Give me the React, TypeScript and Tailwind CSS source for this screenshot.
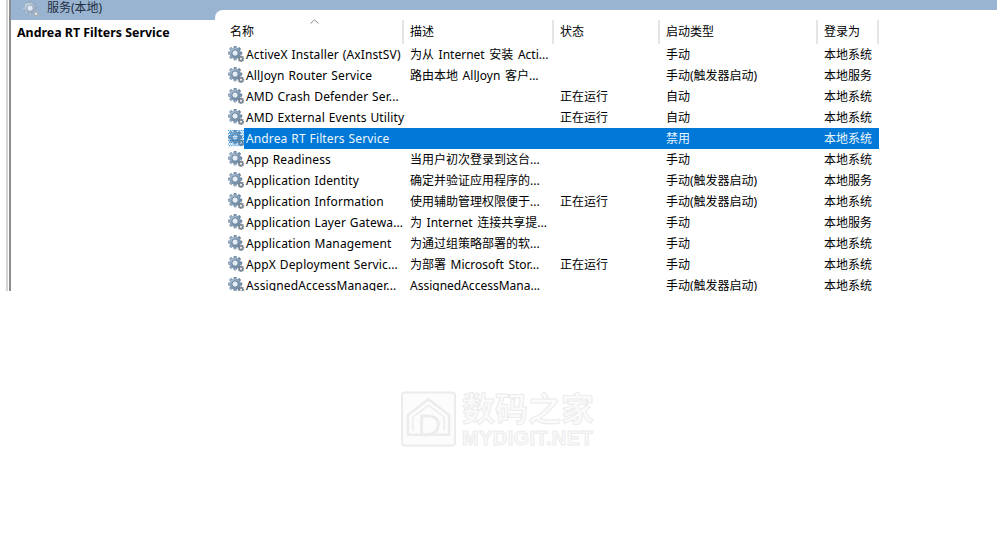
const font = { fontFamily: '"Noto Sans", "Noto Sans CJK SC", sans-serif' };

type Row = { n: string; d: string; s: string; t: string; l: string; sel?: boolean };

const rows: Row[] = [
  { n: "ActiveX Installer (AxInstSV)", d: "为从 Internet 安装 Acti...", s: "", t: "手动", l: "本地系统" },
  { n: "AllJoyn Router Service", d: "路由本地 AllJoyn 客户...", s: "", t: "手动(触发器启动)", l: "本地服务" },
  { n: "AMD Crash Defender Ser...", d: "", s: "正在运行", t: "自动", l: "本地系统" },
  { n: "AMD External Events Utility", d: "", s: "正在运行", t: "自动", l: "本地系统" },
  { n: "Andrea RT Filters Service", d: "", s: "", t: "禁用", l: "本地系统", sel: true },
  { n: "App Readiness", d: "当用户初次登录到这台...", s: "", t: "手动", l: "本地系统" },
  { n: "Application Identity", d: "确定并验证应用程序的...", s: "", t: "手动(触发器启动)", l: "本地服务" },
  { n: "Application Information", d: "使用辅助管理权限便于...", s: "正在运行", t: "手动(触发器启动)", l: "本地系统" },
  { n: "Application Layer Gatewa...", d: "为 Internet 连接共享提...", s: "", t: "手动", l: "本地服务" },
  { n: "Application Management", d: "为通过组策略部署的软...", s: "", t: "手动", l: "本地系统" },
  { n: "AppX Deployment Servic...", d: "为部署 Microsoft Stor...", s: "正在运行", t: "手动", l: "本地系统" },
  { n: "AssignedAccessManager...", d: "AssignedAccessMana...", s: "", t: "手动(触发器启动)", l: "本地系统" },
];

const teeth = [0, 45, 90, 135, 180, 225, 270, 315];

function Gear({ selected, faint }: { selected?: boolean; faint?: boolean }) {
  const id = selected ? "dither" : faint ? "faint" : "plain";
  return (
    <svg width="17" height="17" viewBox="0 0 18 18" className="block shrink-0">
      <defs>
        <radialGradient id={id + "g"} cx="0.35" cy="0.3" r="0.9">
          <stop offset="0" stopColor={faint ? "#d5e0ec" : "#b4c6da"} />
          <stop offset="1" stopColor={faint ? "#7f95ad" : "#5b7896"} />
        </radialGradient>
      </defs>
      <g fill={`url(#${id}g)`}>
        {teeth.map((a) => (
          <rect key={a} x="6.1" y="0" width="2.8" height="15" rx="0.7" transform={`rotate(${a} 7.5 7.5)`} />
        ))}
        <circle cx="7.5" cy="7.5" r="6" />
      </g>
      <circle cx="7.5" cy="7.5" r="3.4" fill={faint ? "#dfe8f2" : "#e4edf6"} />
      <circle cx="7.5" cy="7.5" r="3.4" fill="none" stroke={faint ? "#8aa0b6" : "#5d7792"} strokeWidth="1" />
      <g fill={faint ? "#a7b2bd" : "#7d8894"}>
        {teeth.map((a) => (
          <rect key={a} x="13.1" y="10.2" width="1.3" height="6.6" transform={`rotate(${a} 13.75 13.5)`} />
        ))}
        <circle cx="13.75" cy="13.5" r="2.4" />
      </g>
      <circle cx="13.75" cy="13.5" r="1" fill="#ffffff" />
      {selected && (
        <g fill="#0078d7">
          {Array.from({ length: 100 }).map((_, i) => {
            const x = i % 10;
            const y = Math.floor(i / 10);
            return <rect key={i} x={x * 2 + (y % 2) * 1} y={y * 1.8} width="1.1" height="0.9" />;
          })}
        </g>
      )}
    </svg>
  );
}

function Head({ w, pl, label }: { w: string; pl: string; label: string }) {
  return (
    <div className={`${w} ${pl} h-full shrink-0 border-r-2 border-[#e5e5e5] flex items-center text-[12px] leading-none text-black`}>
      {label}
    </div>
  );
}

export default function App() {
  return (
    <div className="w-[997px] h-[540px] bg-white relative overflow-hidden" style={font}>
      <div className="h-[291px] flex overflow-hidden">
        <div className="ml-[6px] w-[5px] h-full shrink-0 border-l-2 border-r-2 border-l-[#d4d4d4] border-r-[#8c8c8c] bg-white" />
        <div className="flex-1 flex flex-col min-w-0">
          <div className="h-[20px] shrink-0 bg-[#99b4d1] flex">
            <div className="ml-[12px] mt-[1px] h-[16px]">
              <Gear faint />
            </div>
            <div className="ml-[7px] text-[12px] leading-[16px] text-[#1f2d3d]">服务(本地)</div>
          </div>
          <div className="flex-1 flex min-h-0">
            <div className="w-[204px] shrink-0 pl-[6px] pt-[4px] text-[12.4px] leading-[17px] font-bold text-black whitespace-nowrap">
              Andrea RT Filters Service
            </div>
            <div className="relative z-10 -mt-[10px] flex-1 bg-white rounded-tl-[8px] pt-[10px]">
              <div className="relative flex h-[24px]">
                <Head w="w-[189px]" pl="pl-[15px]" label="名称" />
                <Head w="w-[150px]" pl="pl-[6px]" label="描述" />
                <Head w="w-[106px]" pl="pl-[6px]" label="状态" />
                <Head w="w-[158px]" pl="pl-[6px]" label="启动类型" />
                <Head w="w-[61px]" pl="pl-[6px]" label="登录为" />
                <svg width="9" height="5" viewBox="0 0 9 5" className="absolute left-[95px] top-[-1px]">
                  <path d="M0.5 4.5 L4.5 0.8 L8.5 4.5" fill="none" stroke="#8a8a8a" strokeWidth="1" />
                </svg>
              </div>
              {rows.map((r) => (
                <div key={r.n} className="flex h-[21px] w-[664px] text-[12px] leading-[21px] whitespace-nowrap">
                  <div className="w-[29px] pl-[13px] pt-[2px] shrink-0">
                    <Gear selected={r.sel} />
                  </div>
                  <div className={`flex flex-1 ${r.sel ? "bg-[#0078d7] text-[#eef6fd]" : "text-black"}`}>
                    <div className="w-[160px] pl-[2px] shrink-0 tracking-[0.13px] [word-spacing:0.6px]">{r.n}</div>
                    <div className="w-[150px] pl-[6px] shrink-0 [word-spacing:1.5px]">{r.d}</div>
                    <div className="w-[106px] pl-[6px] shrink-0">{r.s}</div>
                    <div className="w-[158px] pl-[6px] shrink-0">{r.t}</div>
                    <div className="w-[61px] pl-[6px] shrink-0">{r.l}</div>
                  </div>
                </div>
              ))}
            </div>
          </div>
        </div>
      </div>

      <div className="absolute left-[401px] top-[389px] flex items-start gap-[6px] select-none">
        <svg width="55" height="56" viewBox="0 0 56 56" fill="none" stroke="#ececec" strokeWidth="2" className="mt-[2px]">
          <rect x="1" y="1" width="54" height="54" rx="3" fill="#fcfcfc" />
          <path d="M7 44 V24 L28 8 L49 24 V44 Z" strokeWidth="2.5" />
          <path d="M12 40 V26 L28 14 L44 26 V40" strokeWidth="1.5" />
          <path d="M21 25 H27 C36 25 38 30 38 34 C38 39 34 44 27 44 H21 Z" strokeWidth="3" />
        </svg>
        <div className="flex flex-col">
          <div
            className="text-[33px] leading-[36px] font-bold text-[#fbfbfb] [-webkit-text-stroke:1px_#ececec]"
            style={{ fontFamily: '"Noto Sans CJK SC", sans-serif' }}
          >
            数码之家
          </div>
          <div
            className="mt-[3px] text-[20px] leading-[20px] font-bold tracking-[0.4px] text-[#fbfbfb] [-webkit-text-stroke:1px_#ececec]"
            style={{ fontFamily: '"Liberation Sans", sans-serif' }}
          >
            MYDIGIT.NET
          </div>
        </div>
      </div>
    </div>
  );
}
